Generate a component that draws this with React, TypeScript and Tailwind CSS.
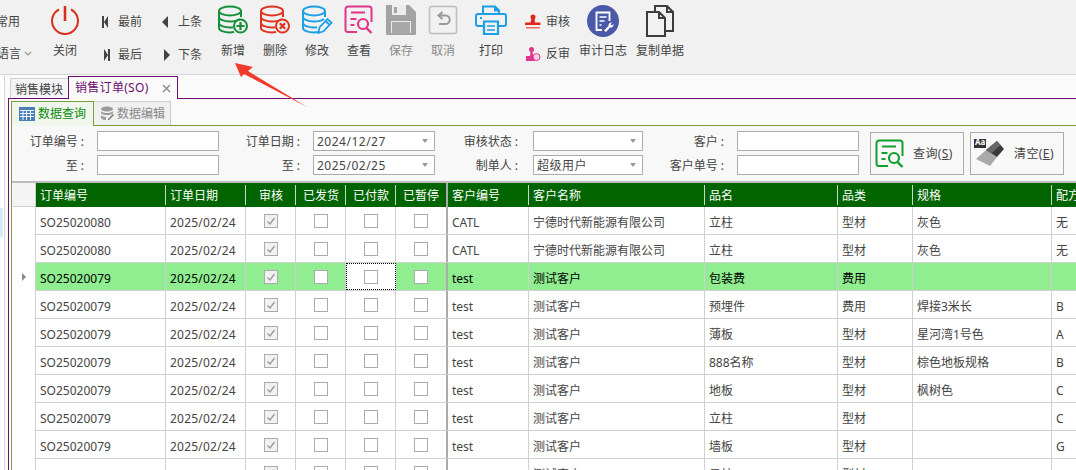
import React from "react";

const cols = [
  { name: "订单编号", w: "w-[130px]" },
  { name: "订单日期", w: "w-[80px]" },
];
const checkCols = [
  { name: "审核", w: "w-[50px]" },
  { name: "已发货", w: "w-[50px]" },
  { name: "已付款", w: "w-[50px]" },
  { name: "已暂停", w: "w-[50px]" },
];
const rightCols = [
  { name: "客户编号", w: "w-[81px]" },
  { name: "客户名称", w: "w-[176px]" },
  { name: "品名", w: "w-[133px]" },
  { name: "品类", w: "w-[75px]" },
  { name: "规格", w: "w-[139px]" },
  { name: "配方", w: "w-[100px]" },
];

const rows = [
  ["SO25020080", "CATL", "宁德时代新能源有限公司", "立柱", "型材", "灰色", "无"],
  ["SO25020080", "CATL", "宁德时代新能源有限公司", "立柱", "型材", "灰色", "无"],
  ["SO25020079", "test", "测试客户", "包装费", "费用", "", ""],
  ["SO25020079", "test", "测试客户", "预埋件", "费用", "焊接3米长", "B"],
  ["SO25020079", "test", "测试客户", "薄板", "型材", "星河湾1号色", "A"],
  ["SO25020079", "test", "测试客户", "888名称", "型材", "棕色地板规格", "B"],
  ["SO25020079", "test", "测试客户", "地板", "型材", "枫树色", "C"],
  ["SO25020079", "test", "测试客户", "立柱", "型材", "", "C"],
  ["SO25020079", "test", "测试客户", "墙板", "型材", "", "G"],
  ["SO25020079", "test", "测试客户", "吊柱", "型材", "", "B"],
];

function DbIcon({ color, badge }: { color: string; badge: "plus" | "x" | "pen" }) {
  return (
    <svg width="32" height="30" viewBox="0 0 32 30" fill="none" stroke={color} strokeWidth="2">
      <ellipse cx="13" cy="6" rx="11" ry="4.5" />
      <path d="M2 6v17c0 2.500 5 4.500 11 4.500 2 0 3-.2 4-.4M24 6v6M2 12c0 2.500 5 4.500 11 4.500 4 0 8-1 10-2.500M2 18c0 2.500 5 4.500 11 4.500 1 0 2 0 3-.2" />
      {badge === "plus" && (
        <>
          <circle cx="23.500" cy="21" r="6.500" fill="#f1f1f1" />
          <path d="M23.500 17v8M19.500 21h8" strokeWidth="2.200" />
        </>
      )}
      {badge === "x" && (
        <>
          <circle cx="23.500" cy="21" r="6.500" fill="#f1f1f1" />
          <path d="M20.800 18.300l5.400 5.400M26.200 18.300l-5.400 5.400" strokeWidth="2.200" />
        </>
      )}
      {badge === "pen" && (
        <path d="M17.500 28l1-5.500 8-8.500 4 3.800-8 8.500zM24.500 16l4 3.800" fill="#f1f1f1" strokeWidth="1.800" />
      )}
    </svg>
  );
}

function ReportIcon({ color, size = 30 }: { color: string; size?: number }) {
  return (
    <svg width={size} height={size} viewBox="0 0 30 30" fill="none" stroke={color} strokeWidth="2">
      <path d="M13 27H4a2.500 2.500 0 0 1-2.500-2.500V4A2.500 2.500 0 0 1 4 1.500h21A2.500 2.500 0 0 1 27.500 4v13" />
      <path d="M7 7.500h14M6.500 14h6M6.500 20h4" />
      <circle cx="19" cy="19" r="5" strokeWidth="2.200" />
      <path d="M22.500 23l5 5" strokeWidth="2.400" />
    </svg>
  );
}

function Tool({ label, icon, muted }: { label: string; icon: React.ReactNode; muted?: boolean }) {
  return (
    <div className="flex w-[42px] shrink-0 flex-col items-center">
      <div className="flex h-[36px] items-center pt-[3px]">{icon}</div>
      <span className={`mt-[5px] pt-[2px] whitespace-nowrap leading-[16px] ${muted ? "text-[#8a8a8a]" : "text-[#444]"}`}>{label}</span>
    </div>
  );
}

function NavBtn({ label, icon }: { label: string; icon: React.ReactNode }) {
  return (
    <div className="flex h-[18px] items-center">
      <svg width="18" height="14" viewBox="0 0 18 14" fill="#444" className="shrink-0">
        {icon}
      </svg>
      <span className="text-[#444]">{label}</span>
    </div>
  );
}

function Toolbar() {
  return (
    <div className="flex h-[75px] shrink-0 border-b border-[#d6d6d6] bg-[#f1f1f1] text-[12px]">
      <div className="flex w-[36px] shrink-0 flex-col overflow-hidden pt-[13px] text-[#444]">
        <div className="flex h-[18px] justify-end">
          <span className="mr-[16px] whitespace-nowrap leading-[18px]">常用</span>
        </div>
        <div className="mt-[14px] flex h-[18px] items-center justify-end">
          <span className="whitespace-nowrap leading-[18px]">语言</span>
          <svg width="8" height="6" viewBox="0 0 8 6" className="mr-[4px] ml-[3px] shrink-0" fill="none" stroke="#999" strokeWidth="1.200">
            <path d="M1 1l3 3 3-3" />
          </svg>
        </div>
      </div>

      <div className="ml-[9px] flex w-[40px] shrink-0 flex-col items-center">
        <div className="flex h-[36px] items-center pt-[3px]">
          <svg width="30" height="30" viewBox="0 0 30 30" fill="none" stroke="#d9301c" strokeWidth="2">
            <path d="M9 4.500a13 13 0 1 0 12 0" />
            <path d="M15 1v15" strokeWidth="2.600" />
          </svg>
        </div>
        <span className="mt-[7px] leading-[16px] text-[#444]">关闭</span>
      </div>

      <div className="ml-[15px] flex w-[60px] shrink-0 flex-col gap-[15px] pt-[13px]">
        <NavBtn label="最前" icon={<path d="M2 1h2v12H2zM8 1v12L4 7z" />} />
        <NavBtn label="最后" icon={<path d="M8 1h2v12H8zM4 1v12l4-6z" />} />
      </div>
      <div className="flex w-[52px] shrink-0 flex-col gap-[15px] pt-[13px]">
        <NavBtn label="上条" icon={<path d="M8 1v12L2 7z" />} />
        <NavBtn label="下条" icon={<path d="M4 1v12l6-6z" />} />
      </div>

      <Tool label="新增" icon={<DbIcon color="#12913a" badge="plus" />} />
      <Tool label="删除" icon={<DbIcon color="#e0331f" badge="x" />} />
      <Tool label="修改" icon={<DbIcon color="#1b9fe6" badge="pen" />} />
      <Tool label="查看" icon={<ReportIcon color="#e0358b" />} />
      <Tool
        label="保存"
        muted
        icon={
          <svg width="30" height="30" viewBox="0 0 30 30">
            <path d="M1 0h22l7 7v22a1 1 0 0 1-1 1H1a1 1 0 0 1-1-1V1a1 1 0 0 1 1-1z" fill="#a3a3a3" />
            <path d="M6 0h14v10H6z" fill="#ececec" />
            <path d="M8 2h3v6H8z" fill="#a3a3a3" />
            <path d="M5 16h20v12H5z" fill="#ececec" />
            <path d="M6 17h18v11H6z" fill="#a9a9a9" />
          </svg>
        }
      />
      <Tool
        label="取消"
        muted
        icon={
          <svg width="30" height="30" viewBox="0 0 30 30" fill="none" stroke="#bdbdbd">
            <rect x="1.500" y="1.500" width="27" height="27" rx="2" strokeWidth="1.500" />
            <path d="M12 10.500h5.500a4 4 0 0 1 0 8.500H11" stroke="#999" strokeWidth="2" />
            <path d="M14.500 7l-4 3.500 4 3.500" stroke="#999" strokeWidth="2" />
          </svg>
        }
      />

      <div className="ml-[6px]">
        <Tool
          label="打印"
          icon={
            <svg width="32" height="30" viewBox="0 0 32 30" fill="none" stroke="#1b9fe6" strokeWidth="2">
              <path d="M8 9V1.500h12l4 4V9" />
              <path d="M20 1.500v4h4" fill="#1b9fe6" />
              <path d="M8 21H3a2 2 0 0 1-2-2v-8a2 2 0 0 1 2-2h26a2 2 0 0 1 2 2v8a2 2 0 0 1-2 2h-5" />
              <path d="M9 16.500h14V29H9z" strokeWidth="2.200" />
              <path d="M12 21h8M12 25h8" strokeWidth="1.600" />
              <path d="M5 13h2" />
            </svg>
          }
        />
      </div>

      <div className="ml-[13px] flex w-[50px] shrink-0 flex-col gap-[14px] pt-[13px] text-[#444]">
        <div className="flex h-[18px] items-center gap-[5px]">
          <svg width="16" height="16" viewBox="0 0 16 16" className="shrink-0" fill="#e0281a">
            <circle cx="8" cy="3" r="2.500" />
            <path d="M6.500 4.500h3l.5 4h4.500a1 1 0 0 1 1 1V11H0V9.500a1 1 0 0 1 1-1h4.500z" />
            <path d="M1 13h14v1.500H1z" fill="#ef6a5c" />
          </svg>
          <span>审核</span>
        </div>
        <div className="flex h-[18px] items-center gap-[5px]">
          <svg width="16" height="16" viewBox="0 0 16 16" className="shrink-0" fill="#e0358b">
            <circle cx="6.500" cy="3.500" r="2.500" />
            <path d="M5.500 5.500h2l.5 4h2v5.500H1V10h4z" />
            <circle cx="11.500" cy="11" r="3.500" fill="#f7d0e4" stroke="#e0358b" />
          </svg>
          <span>反审</span>
        </div>
      </div>

      <div className="flex w-[56px] shrink-0 flex-col items-center">
        <div className="flex h-[36px] items-center pt-[5px]">
          <svg width="32" height="32" viewBox="0 0 32 32" fill="none">
            <circle cx="16" cy="16" r="16" fill="#4a5aa8" />
            <path d="M15 25H9.500V7.500h13V16" stroke="#fff" strokeWidth="1.800" />
            <path d="M12.500 12h7M12.500 16h5M12.500 20h2" stroke="#fff" strokeWidth="1.500" />
            <path d="M17 25.500l4.500-4.500a3 3 0 0 1 3.500-3.500l-1.500 1.700 1.300 1.300 1.700-1.500a3 3 0 0 1-3.500 3.500L19 27z" fill="#fff" />
          </svg>
        </div>
        <span className="mt-[7px] whitespace-nowrap leading-[16px] text-[#444]">审计日志</span>
      </div>

      <div className="ml-px flex w-[56px] shrink-0 flex-col items-center">
        <div className="flex h-[36px] items-center pt-[5px]">
          <svg width="30" height="32" viewBox="0 0 30 32" fill="none" stroke="#3c3c3c" strokeWidth="2">
            <path d="M10 6V1h12l6 6v19h-8" />
            <path d="M22 1v6h6" />
            <path d="M2 7h12l6 6v18H2z" />
            <path d="M14 7v6h6" />
          </svg>
        </div>
        <span className="mt-[7px] whitespace-nowrap leading-[16px] text-[#444]">复制单据</span>
      </div>
    </div>
  );
}

function Field({ value, select, w = "w-[122px]" }: { value?: string; select?: boolean; w?: string }) {
  return (
    <div className={`flex h-[20px] ${w} shrink-0 items-center border border-[#ababab] bg-white pl-[3px] text-[#444]`}>
      <span className="flex-1 pt-[2px] leading-[18px] tracking-[0.5px]">{value}</span>
      {select && <span className="mr-[6px] h-0 w-0 border-x-[3.500px] border-t-[4px] border-x-transparent border-t-[#999]" />}
    </div>
  );
}

function FilterCol({ labels, labelW, gap, children }: { labels: string[]; labelW: string; gap: string; children: React.ReactNode }) {
  return (
    <div className={`flex shrink-0 ${gap}`}>
      <div className={`flex ${labelW} flex-col gap-[4px] text-right text-[#444]`}>
        {labels.map((l) => (
          <div key={l} className="h-[20px] whitespace-nowrap pt-[1px] leading-[20px]">
            {l}
            <span className="ml-[3px]">:</span>
          </div>
        ))}
      </div>
      <div className="flex flex-col gap-[4px]">{children}</div>
    </div>
  );
}

function Filters() {
  return (
    <div className="flex h-[55px] shrink-0 bg-[#f8f8f8] pt-[5px]">
      <FilterCol labels={["订单编号", "至"]} labelW="w-[72px]" gap="gap-[13px]">
        <Field />
        <Field />
      </FilterCol>
      <FilterCol labels={["订单日期", "至"]} labelW="w-[81px]" gap="gap-[13px]">
        <Field value="2024/12/27" select />
        <Field value="2025/02/25" select />
      </FilterCol>
      <FilterCol labels={["审核状态", "制单人"]} labelW="w-[83px]" gap="gap-[15px]">
        <Field select w="w-[110px]" />
        <Field value="超级用户" select w="w-[110px]" />
      </FilterCol>
      <FilterCol labels={["客户", "客户单号"]} labelW="w-[81px]" gap="gap-[13px]">
        <Field />
        <Field />
      </FilterCol>
      <button className="mt-px ml-[11px] flex h-[43px] w-[94px] shrink-0 items-center border border-[#ababab] bg-[#f8f8f8] pl-[4px] text-[#444]">
        <ReportIcon color="#12a02c" size={30} />
        <span className="ml-[8px] tracking-[0.4px]">
          查询(<span className="underline">S</span>)
        </span>
      </button>
      <button className="relative mt-px ml-[6px] flex h-[43px] w-[94px] shrink-0 items-center border border-[#ababab] bg-[#f8f8f8] pl-[3px] text-[#444]">
        <svg width="32" height="30" viewBox="0 0 32 30" className="shrink-0">
          <path d="M0 0h12v9H0z" fill="#333" />
          <path d="M2 20L12 11 23 18 16 27z" fill="#aaa" />
          <path d="M12 11L23 2 30 10 23 18z" fill="#3a3a3a" />
          <path d="M12 11L23 2 26.500 6 17.500 14.500z" fill="#666" />
        </svg>
        <span className="absolute top-[4px] left-[4px] text-[8px] leading-[9px] font-bold text-white">Aa</span>
        <span className="ml-[8px] tracking-[0.4px]">
          清空(<span className="underline">E</span>)
        </span>
      </button>
    </div>
  );
}

function Check({ checked }: { checked?: boolean }) {
  return (
    <span className={`flex h-[14px] w-[14px] items-center justify-center border border-[#ababab] ${checked ? "bg-[#f1f1f1]" : "bg-white"}`}>
      {checked && (
        <svg width="10" height="10" viewBox="0 0 10 10" fill="none" stroke="#999" strokeWidth="1.300">
          <path d="M1.500 5.500l2.500 2.500 4.500-6" />
        </svg>
      )}
    </span>
  );
}

function HeaderCell({ name, w, center, last }: { name: string; w: string; center?: boolean; last?: boolean }) {
  return (
    <div className={`flex h-full ${w} shrink-0 items-center pt-[3px] pb-px ${center ? "justify-center" : "pl-[4px]"} relative`}>
      <span className="whitespace-nowrap">{name}</span>
      {!last && <span className="absolute top-[2px] right-0 bottom-[2px] w-px bg-[#c8d8c8]" />}
    </div>
  );
}

function Grid() {
  return (
    <div className="flex flex-col border-t-2 border-[#bcbcbc] pl-px text-[12px]">
      <div className="flex h-[24px] shrink-0">
        <div className="h-full w-[23px] shrink-0 border-r border-b border-[#d0d0d0] bg-[#f4f4f4]" />
        <div className="flex h-full shrink-0 bg-[#006400] text-white">
          {cols.map((c) => (
            <HeaderCell key={c.name} name={c.name} w={c.w} />
          ))}
          {checkCols.map((c) => (
            <HeaderCell key={c.name} name={c.name} w={c.w} center last={c.name === "已暂停"} />
          ))}
          <div className="h-full w-[2px] shrink-0 bg-[#aaa]" />
          {rightCols.map((c) => (
            <HeaderCell key={c.name} name={c.name} w={c.w} />
          ))}
        </div>
      </div>
      {rows.map((r, i) => {
        const sel = i === 2;
        const cell = "flex h-full shrink-0 items-center border-r border-[#d0d0d0] pt-[4px] pl-[4px] whitespace-nowrap";
        const boxCell = "flex h-full shrink-0 items-center justify-center border-r border-[#d0d0d0]";
        return (
          <div key={i} className="flex h-[28px] shrink-0">
            <div className="flex h-full w-[23px] shrink-0 items-center border-r border-[#d0d0d0] bg-white pl-[9px]">
              {sel && <span className="h-0 w-0 border-y-[4px] border-l-[4px] border-y-transparent border-l-[#888]" />}
            </div>
            <div className={`flex h-full shrink-0 border-b border-[#d0d0d0] ${sel ? "bg-[#90ee90] text-black" : "bg-white text-[#444]"}`}>
              <div className={`${cell} w-[130px]`}>{r[0]}</div>
              <div className={`${cell} w-[80px] tracking-[0.2px]`}>2025/02/24</div>
              <div className={`${boxCell} w-[50px]`}>
                <Check checked />
              </div>
              <div className={`${boxCell} w-[50px]`}>
                <Check />
              </div>
              <div className={`${boxCell} w-[50px] ${sel ? "border border-dotted border-black bg-white" : ""}`}>
                <Check />
              </div>
              <div className="flex h-full w-[50px] shrink-0 items-center justify-center">
                <Check />
              </div>
              <div className="h-full w-[2px] shrink-0 bg-[#aaa]" />
              <div className={`${cell} w-[81px]`}>{r[1]}</div>
              <div className={`${cell} w-[176px]`}>{r[2]}</div>
              <div className={`${cell} w-[133px]`}>{r[3]}</div>
              <div className={`${cell} w-[75px]`}>{r[4]}</div>
              <div className={`${cell} w-[139px]`}>{r[5]}</div>
              <div className={`${cell} w-[100px]`}>{r[6]}</div>
            </div>
          </div>
        );
      })}
    </div>
  );
}

export default function App() {
  return (
    <div className="relative flex h-[470px] w-[1076px] flex-col overflow-hidden bg-[#fafafa] font-['Noto_Sans','Noto_Sans_CJK_SC',sans-serif] text-[12px]">
      <Toolbar />
      <div className="flex min-h-0 flex-1">
        <div className="w-[5px] shrink-0 border-r border-[#d6d6d6] bg-white">
          <div className="mt-[133px] h-[29px] w-[3px] bg-[#d6eafa]" />
        </div>
        <div className="min-w-0 flex-1">
          <div className="flex h-[23px] items-end pl-[5px]">
            <div className="flex h-[20px] w-[58px] items-center justify-start border-t border-l border-[#d0d0d0] bg-[#f4f4f4] pt-[2px] pl-[4px] text-[#444]">
              销售模块
            </div>
            <div className="relative z-10 -mb-px flex h-[23px] w-[110px] items-center border border-b-0 border-[#6a0f70] bg-[#fafafa] pl-[6px] text-[#6a0f70]">
              <span className="whitespace-nowrap tracking-[0.3px]">销售订单(SO)</span>
              <svg width="9" height="9" viewBox="0 0 9 9" className="ml-[13px]" fill="none" stroke="#888" strokeWidth="1.300">
                <path d="M1 1l7 7M8 1l-7 7" />
              </svg>
            </div>
          </div>
          <div className="ml-[3px] border-t border-l border-[#6a0f70] pt-[2px] pl-[2px]">
            <div className="flex h-[24px] items-end">
              <div className="relative z-10 -mb-px flex h-[25px] w-[83px] items-center gap-[3px] border border-b-0 border-[#7f9c3a] bg-[#f1f6ec] pl-[7px] text-[#0b8a0b]">
                <svg width="16" height="14" viewBox="0 0 16 14" className="shrink-0">
                  <path d="M0 0h16v14H0z" fill="#4a80b8" />
                  <path d="M1 3.500h14M1 6.500h14M1 9.500h14M4 3v10M7.500 3v10M11.500 3v10" stroke="#fff" strokeWidth="0.900" />
                </svg>
                <span className="whitespace-nowrap">数据查询</span>
              </div>
              <div className="flex h-[24px] w-[77px] items-center gap-[3px] border-t border-r border-[#ccc] bg-[#f0f0f0] pl-[6px] text-[#888]">
                <svg width="14" height="15" viewBox="0 0 14 15" className="shrink-0" fill="#9a9a9a">
                  <ellipse cx="7" cy="3" rx="6" ry="2.500" />
                  <path d="M1 5c1 1.500 3 2 6 2s5-.5 6-2v2c-1 1.500-3 2-6 2S2 8.500 1 7zM1 9c1 1.500 3 2 5 2v3c-3 0-4-1-5-2z" />
                  <path d="M8 13l5-5 1 1-5 5H8z" fill="#777" />
                </svg>
                <span className="whitespace-nowrap">数据编辑</span>
              </div>
            </div>
            <div className="border-t border-l border-[#7f9c3a]">
              <Filters />
              <Grid />
            </div>
          </div>
        </div>
      </div>
      <svg width="1076" height="470" viewBox="0 0 1076 470" className="pointer-events-none absolute top-0 left-0">
        <path d="M235 63l18 4-5 4 59 36-63-33-3 3z" fill="#f23a2a" />
      </svg>
    </div>
  );
}
